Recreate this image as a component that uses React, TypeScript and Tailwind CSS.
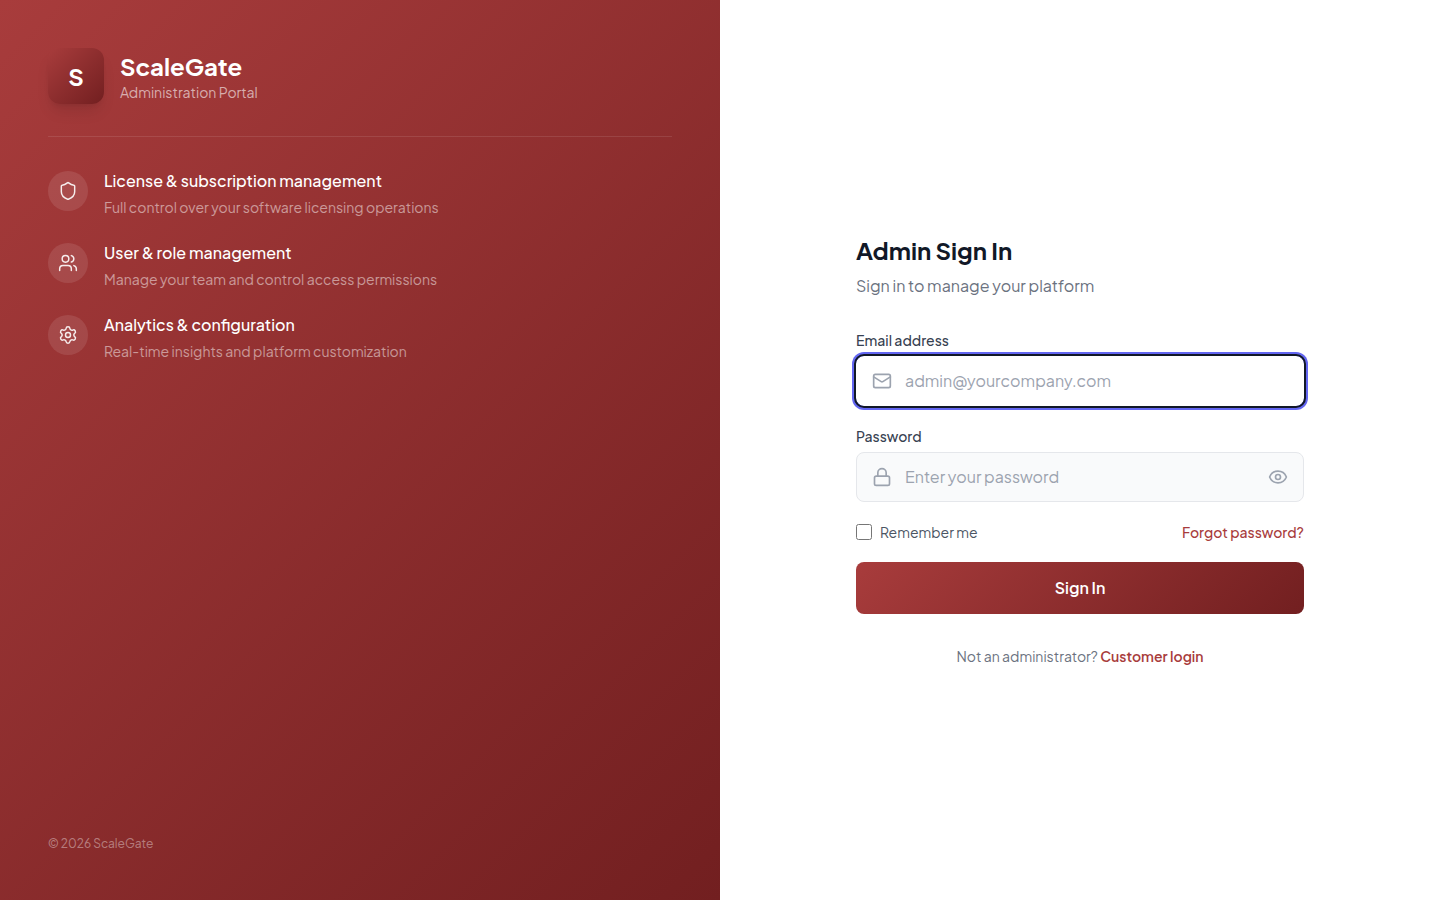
import { useState } from "react"
import { Eye, Lock, Mail, Settings, Shield, Users } from "lucide-react"

const features = [
  {
    title: "License & subscription management",
    text: "Full control over your software licensing operations",
    icon: Shield,
  },
  {
    title: "User & role management",
    text: "Manage your team and control access permissions",
    icon: Users,
  },
  {
    title: "Analytics & configuration",
    text: "Real-time insights and platform customization",
    icon: Settings,
  },
]

export default function App() {
  const [showPassword, setShowPassword] = useState(false)

  return (
    <div className="min-h-screen grid lg:grid-cols-2 bg-white font-['Plus_Jakarta_Sans',Inter,sans-serif]">
      {/* Brand panel */}
      <aside className="flex flex-col p-12 text-white bg-[linear-gradient(135deg,#a83c3c_0%,#721f20_100%)]">
        <header className="flex items-center gap-4 pb-8 border-b border-white/10">
          <div className="w-14 h-14 flex items-center justify-center rounded-xl text-2xl font-bold shadow-lg bg-[linear-gradient(135deg,#a83c3c_0%,#721f20_100%)]">
            S
          </div>
          <div>
            <h1 className="text-2xl font-bold">ScaleGate</h1>
            <p className="text-sm text-white/60">Administration Portal</p>
          </div>
        </header>

        <ul className="flex flex-col gap-6 mt-8">
          {features.map(({ title, text, icon: Icon }) => (
            <li key={title} className="flex items-start gap-4">
              <div className="w-10 h-10 mt-0.5 shrink-0 flex items-center justify-center rounded-full bg-white/10 text-white/90">
                <Icon className="w-5 h-5" strokeWidth={1.75} />
              </div>
              <div>
                <h2 className="text-base font-medium">{title}</h2>
                <p className="mt-1 text-sm text-white/50">{text}</p>
              </div>
            </li>
          ))}
        </ul>

        <footer className="mt-auto text-xs text-white/40">© 2026 ScaleGate</footer>
      </aside>

      {/* Sign in form */}
      <main className="flex items-center justify-center p-8">
        <div className="w-full max-w-md">
          <h2 className="text-2xl font-bold text-[#111827]">Admin Sign In</h2>
          <p className="mt-2 text-base text-[#6b7280]">Sign in to manage your platform</p>

          <form className="mt-8" onSubmit={(e) => e.preventDefault()}>
            <label htmlFor="email" className="block mb-1.5 text-sm font-medium text-[#374151]">
              Email address
            </label>
            <div className="relative">
              <Mail className="absolute left-4 inset-y-0 my-auto w-5 h-5 text-[#9ca3af]" />
              <input
                id="email"
                type="email"
                placeholder="admin@yourcompany.com"
                className="block w-full py-3 pl-12 pr-4 rounded-lg border border-white bg-white text-base text-[#111827] placeholder:text-[#9ca3af] outline-2 outline-[#111827] ring-4 ring-[#6366f1]"
              />
            </div>

            <label htmlFor="password" className="block mt-5 mb-1.5 text-sm font-medium text-[#374151]">
              Password
            </label>
            <div className="relative">
              <Lock className="absolute left-4 inset-y-0 my-auto w-5 h-5 text-[#9ca3af]" />
              <input
                id="password"
                type={showPassword ? "text" : "password"}
                placeholder="Enter your password"
                className="block w-full py-3 px-12 rounded-lg border border-[#e5e7eb] bg-[#f9fafb] text-base text-[#111827] placeholder:text-[#9ca3af]"
              />
              <button
                type="button"
                aria-label={showPassword ? "Hide password" : "Show password"}
                className="absolute right-4 inset-y-0 text-[#9ca3af]"
                onClick={() => setShowPassword(!showPassword)}
              >
                <Eye className="w-5 h-5" />
              </button>
            </div>

            <div className="flex items-center justify-between mt-5 text-sm">
              <label className="flex items-center gap-2 text-[#4b5563]">
                <input type="checkbox" className="w-4 h-4" />
                Remember me
              </label>
              <a href="#" className="font-medium text-[#a83c3c]">
                Forgot password?
              </a>
            </div>

            <button
              type="submit"
              className="w-full py-3.5 mt-5 rounded-lg text-base font-semibold text-white bg-[linear-gradient(135deg,#a83c3c_0%,#721f20_100%)]"
            >
              Sign In
            </button>
          </form>

          <p className="mt-8 text-center text-sm text-[#6b7280]">
            Not an administrator?{" "}
            <a href="#" className="font-semibold text-[#a83c3c]">
              Customer login
            </a>
          </p>
        </div>
      </main>
    </div>
  )
}
